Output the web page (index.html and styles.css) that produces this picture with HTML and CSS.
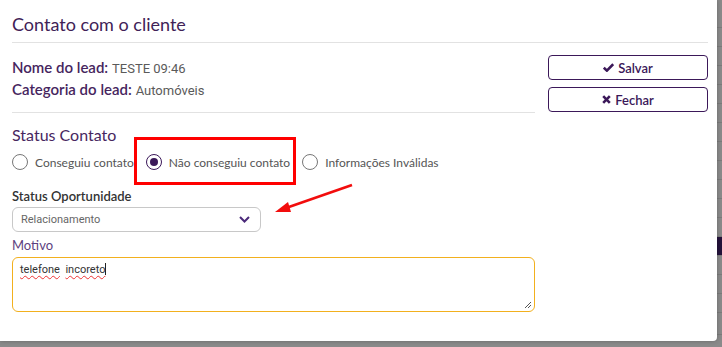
FILE: index.html
```html
<!DOCTYPE html>
<html lang="pt-BR">
<head>
  <meta charset="UTF-8">
  <meta name="viewport" content="width=device-width, initial-scale=1.0">
  <title>Contato com o cliente</title>
  <link rel="stylesheet" href="styles.css">
</head>
<body>
  <div class="fundo">
    <div class="linha"></div>
    <div class="linha"></div>
    <div class="linha"></div>
    <div class="linha"></div>
    <div class="linha"></div>
    <div class="linha"></div>
    <div class="linha"></div>
    <div class="linha"></div>
    <div class="linha"></div>
    <div class="linha"></div>
    <div class="linha"></div>
    <div class="linha"></div>
    <div class="linha destaque"></div>
    <div class="linha"></div>
    <div class="linha"></div>
    <div class="linha"></div>
    <div class="linha dados">
      <span class="col c1">umber</span>
      <span class="col c2">(11) 2341234</span>
      <span class="col c3">Consorcio</span>
      <span class="col c4"><i class="ico-car"></i>Automóvel</span>
      <span class="col c5">Aberto</span>
    </div>
  </div>

  <div class="modal">
    <h2 class="titulo">Contato com o cliente</h2>

    <div class="lead">
      <div class="lead-info">
        <p><b>Nome do lead:</b> <span class="valor">TESTE 09:46</span></p>
        <p><b>Categoria do lead:</b> <span class="valor">Automóveis</span></p>
      </div>
      <div class="acoes">
        <button class="botao">
          <svg width="11" height="9" viewBox="0 0 11 9"><path d="M0.8 4.6 L3.9 7.6 L10.2 1.2" fill="none" stroke="#3b1859" stroke-width="2.6"/></svg>
          Salvar
        </button>
        <button class="botao">
          <svg width="9" height="9" viewBox="0 0 9 9"><path d="M1.2 1.2 L7.8 7.8 M7.8 1.2 L1.2 7.8" stroke="#3b1859" stroke-width="2.6"/></svg>
          Fechar
        </button>
      </div>
    </div>

    <div class="status">
      <h3 class="subtitulo">Status Contato</h3>
      <div class="opcoes">
        <label class="opcao"><span class="radio"></span>Conseguiu contato</label>
        <label class="opcao"><span class="radio marcado"></span>Não conseguiu contato</label>
        <label class="opcao"><span class="radio"></span>Informações Inválidas</label>
      </div>

      <div class="rotulo">Status Oportunidade</div>
      <div class="select">
        <span>Relacionamento</span>
        <svg width="11" height="7" viewBox="0 0 11 7"><path d="M1 1 L5.5 5.5 L10 1" fill="none" stroke="#4b2a7a" stroke-width="2"/></svg>
      </div>

      <div class="rotulo motivo">Motivo</div>
      <div class="textarea">
        <span class="erro">telefone</span>&nbsp; <span class="erro">incoreto</span><span class="cursor"></span>
        <svg class="alca" width="9" height="9" viewBox="0 0 9 9"><path d="M8 2 L2 8 M8 5 L5 8" stroke="#555" stroke-width="1"/></svg>
      </div>
    </div>

    <div class="marca"></div>
    <svg class="seta" width="80" height="32" viewBox="0 0 80 32">
      <path d="M78 2 L12 25" stroke="#f20d0d" stroke-width="2.6" fill="none"/>
      <path d="M1 29 L14 19 L17 29 Z" fill="#f20d0d"/>
    </svg>
  </div>
</body>
</html>
```

FILE: styles.css
```css
body {
  margin: 0;
  background: #8a8a8a;
  font-family: "Lato", "Noto Sans", sans-serif;
  overflow: hidden;
}

.fundo {
  padding-top: 9px;
}
.linha {
  height: 18px;
  border-bottom: 1px solid #7b7b7b;
}
.linha.destaque {
  background: #24123a;
}
.dados {
  display: flex;
  font-family: "Liberation Sans", sans-serif;
  font-size: 13px;
  color: #3a3a3a;
  padding-top: 3px;
}
.col {
  border-left: 1px solid #6e6e6e;
  padding-left: 8px;
  white-space: nowrap;
}
.c1 { width: 44px; border-left: none; padding-left: 6px; }
.c2 { width: 104px; }
.c3 { width: 103px; }
.c4 { width: 181px; }
.c5 { width: 103px; }
.ico-car {
  display: inline-block;
  width: 10px;
  height: 10px;
  border: 2px solid #b22;
  border-radius: 50%;
  margin-right: 6px;
}

.modal {
  position: absolute;
  left: 0;
  top: 0;
  width: 717px;
  height: 341px;
  background: #fff;
  border-radius: 0 0 4px 0;
  box-shadow: 0 0 4px rgba(0, 0, 0, 0.25);
}

.titulo {
  margin: 0 9px 0 12px;
  padding-top: 12px;
  box-sizing: border-box;
  height: 43px;
  border-bottom: 1px solid #e2e2e2;
  font-size: 18px;
  font-weight: 400;
  color: #3f2257;
  line-height: 24px;
}

.lead {
  display: flex;
  margin: 12px 0 0 12px;
}
.lead-info {
  width: 523px;
  border-bottom: 1px solid #e2e2e2;
  padding-top: 2px;
  padding-bottom: 11px;
}
.lead-info p {
  margin: 0;
  line-height: 21px;
  font-size: 15px;
  color: #46255e;
}
.lead-info b {
  font-weight: 600;
}
.valor {
  font-family: "Roboto", sans-serif;
  font-size: 13px;
  color: #5a5a5a;
}

.acoes {
  display: flex;
  flex-direction: column;
  gap: 7px;
  margin-left: 13px;
}
.botao {
  width: 160px;
  height: 25px;
  background: #fff;
  border: 1.5px solid #3b1859;
  border-radius: 4px;
  font-family: "Lato", sans-serif;
  font-size: 13px;
  font-weight: 600;
  color: #3b1859;
  display: flex;
  align-items: center;
  justify-content: center;
  gap: 4px;
  padding: 0;
}

.status {
  margin-left: 12px;
  padding-top: 12px;
}
.subtitulo {
  margin: 0;
  font-size: 16px;
  font-weight: 400;
  color: #47275f;
  line-height: 20px;
}
.opcoes {
  display: flex;
  gap: 12px;
  margin-top: 9px;
  height: 16px;
}
.opcao {
  display: flex;
  align-items: center;
  gap: 7px;
  font-size: 12px;
  color: #555;
}
.radio {
  width: 14px;
  height: 14px;
  border: 1px solid #777;
  border-radius: 50%;
  display: flex;
  align-items: center;
  justify-content: center;
}
.radio.marcado {
  border-color: #3b1859;
}
.radio.marcado::after {
  content: "";
  width: 8px;
  height: 8px;
  border-radius: 50%;
  background: #3b1859;
}

.rotulo {
  margin-top: 18px;
  font-size: 13px;
  font-weight: 600;
  color: #333;
  line-height: 16px;
}
.select {
  width: 249px;
  height: 25px;
  box-sizing: border-box;
  margin-top: 3px;
  border: 1px solid #c8c8c8;
  border-radius: 6px;
  display: flex;
  align-items: center;
  justify-content: space-between;
  padding: 0 10px 0 8px;
  font-family: "Roboto", sans-serif;
  font-size: 11px;
  color: #666;
}
.rotulo.motivo {
  margin-top: 5px;
  font-weight: 400;
  color: #5d3f7f;
}
.textarea {
  position: relative;
  width: 523px;
  height: 55px;
  box-sizing: border-box;
  margin-top: 4px;
  border: 1px solid #f2b01e;
  border-radius: 6px;
  padding: 5px 7px;
  font-family: "Roboto", sans-serif;
  font-size: 11px;
  color: #333;
}
.erro {
  text-decoration: underline wavy #e33;
  text-decoration-thickness: 1px;
  text-underline-offset: 2px;
}
.cursor {
  display: inline-block;
  width: 1px;
  height: 12px;
  background: #222;
  vertical-align: -2px;
}
.alca {
  position: absolute;
  right: 2px;
  bottom: 2px;
}

.marca {
  position: absolute;
  left: 134px;
  top: 137px;
  width: 162px;
  height: 48px;
  box-sizing: border-box;
  border: 3px solid #f00;
}
.seta {
  position: absolute;
  left: 274px;
  top: 183px;
}
```
